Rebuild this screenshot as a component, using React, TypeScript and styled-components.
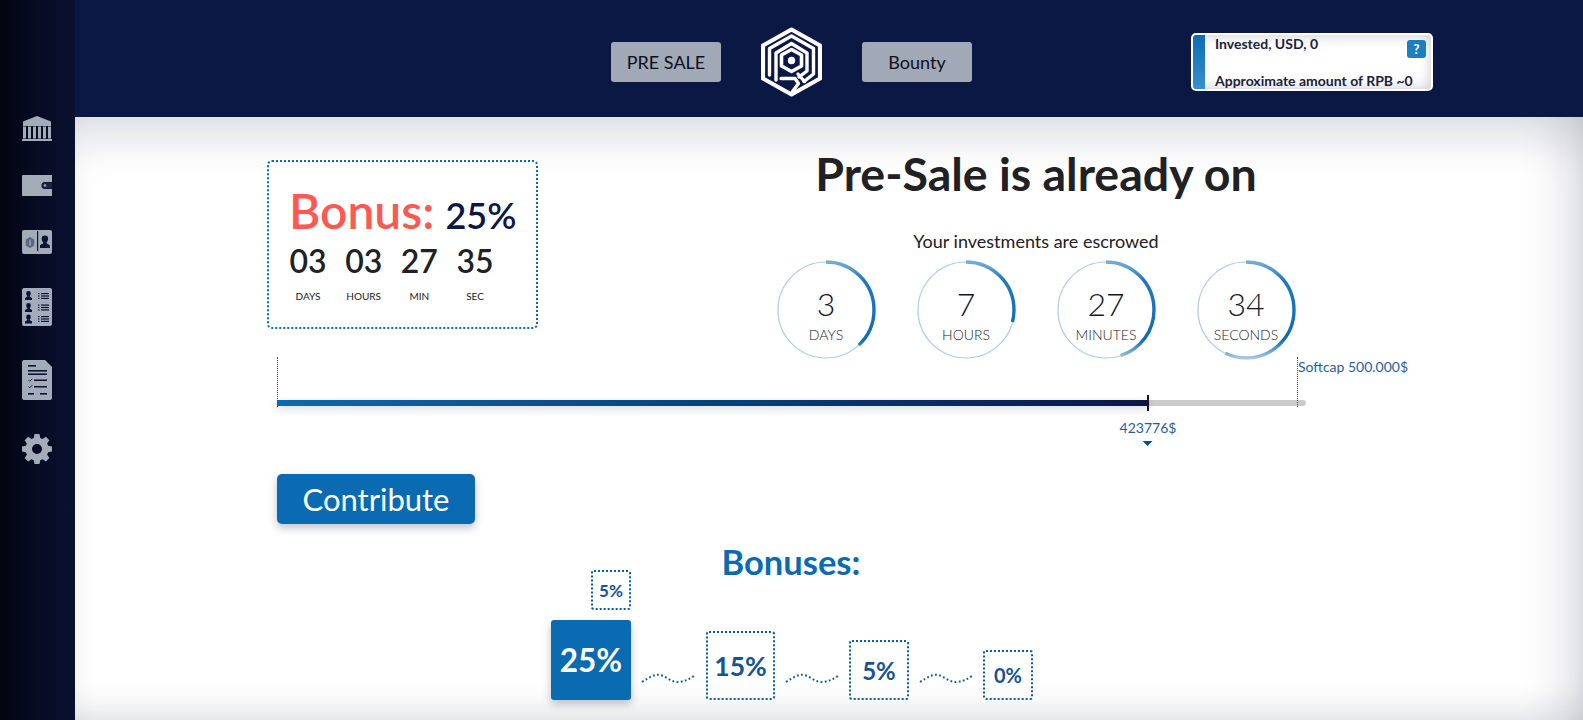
import React from 'react'
import styled, {createGlobalStyle} from 'styled-components'

const GlobalStyle = createGlobalStyle`
html, body {
  margin: 0;
  padding: 0;
  height: 720px;
  overflow: hidden;
  background: #fff;
  font-family: Lato, "Open Sans", sans-serif;
}
`

const Page = styled.div`
display: flex;
width: 1583px;
height: 720px;
overflow: hidden;
`

const Sidebar = styled.nav`
width: 75px;
flex: none;
height: 720px;
box-sizing: border-box;
padding: 116px 0 0 22px;
background: linear-gradient(90deg, #02040f 0%, #060a20 35%, #0a1130 100%);
display: flex;
flex-direction: column;
align-items: flex-start;
`

const SideIcon = styled.svg<{ $gap: number }>`
display: block;
margin-bottom: ${p => p.$gap}px;
`

const Right = styled.div`
flex: 1;
display: flex;
flex-direction: column;
min-width: 0;
`

const Header = styled.header`
height: 117px;
flex: none;
background: #0b1843;
box-sizing: border-box;
padding-left: 536px;
display: flex;
align-items: flex-start;
`

const NavButton = styled.div`
width: 110px;
height: 40px;
margin-top: 42px;
border-radius: 3px;
background: #a2a9b6;
color: #0d0f1c;
font-size: 18px;
display: flex;
align-items: center;
justify-content: center;
`

const Logo = styled.svg`
margin: 27px 40px 0;
display: block;
`

const InfoBox = styled.div`
width: 242px;
height: 58px;
margin: 33px 0 0 219px;
box-sizing: border-box;
border: 2px solid #fff;
border-radius: 5px;
overflow: hidden;
position: relative;
display: flex;
background: #fff;
box-shadow: inset 0 0 14px rgba(0, 0, 0, .22);
`

const InfoStripe = styled.div`
width: 12px;
flex: none;
background: linear-gradient(180deg, #0d6cb4 0%, #3690cf 100%);
`

const InfoText = styled.div`
padding-left: 10px;
color: #1c2238;
font-size: 14px;
font-weight: 700;
line-height: 16px;
display: flex;
flex-direction: column;
justify-content: space-between;
height: 53px;
margin-top: 1px;
`

const HelpBadge = styled.div`
position: absolute;
top: 5px;
right: 5px;
width: 19px;
height: 18px;
border-radius: 3px;
background: #1c7fc4;
color: #fff;
font-size: 13px;
font-weight: 700;
display: flex;
align-items: center;
justify-content: center;
`

const Main = styled.main`
flex: 1;
height: 603px;
box-sizing: border-box;
padding: 43px 0 0 193px;
background: #fff;
box-shadow: inset 0 40px 40px -16px rgba(10, 20, 50, .12),
  inset -44px 0 44px -24px rgba(10, 20, 50, .12),
  inset 0 -26px 30px -14px rgba(10, 20, 50, .1);
color: #202124;
`

const TopRow = styled.div`
display: flex;
align-items: flex-start;
`

const BonusCard = styled.div`
width: 271px;
height: 169px;
margin-left: -1px;
box-sizing: border-box;
border: 2px dotted #0a6ab2;
border-radius: 5px;
padding: 20px 0 0 20px;
background: #fff;
`

const BonusTitle = styled.div`
display: flex;
align-items: baseline;
height: 57px;
line-height: 57px;
`

const BonusWord = styled.span`
font-size: 48px;
color: #fb5a52;
font-weight: 600;
`

const BonusValue = styled.span`
margin-left: 11px;
font-size: 36px;
font-weight: 600;
color: #0b1843;
`

const MiniTimer = styled.div`
display: grid;
grid-template-columns: repeat(4, 55.7px);
margin-top: 2px;
`

const MiniUnit = styled.div`
display: flex;
flex-direction: column;
align-items: center;
width: 38px;
`

const MiniNumber = styled.div`
font-size: 32px;
font-weight: 600;
line-height: 40px;
`

const MiniLabel = styled.div`
font-size: 10px;
line-height: 12px;
margin-top: 9px;
`

const Headline = styled.div`
margin-left: 198px;
width: 600px;
display: flex;
flex-direction: column;
align-items: center;
`

const Title = styled.h1`
margin: -16px 0 0;
font-size: 46.5px;
line-height: 58px;
font-weight: 700;
color: #202124;
white-space: nowrap;
`

const Escrow = styled.div`
margin-top: 29px;
font-size: 18px;
line-height: 20px;
`

const Rings = styled.div`
display: flex;
gap: 40px;
margin-top: 9px;
`

const Ring = styled.div`
position: relative;
width: 100px;
height: 100px;
`

const RingText = styled.div`
position: absolute;
inset: 0;
display: flex;
flex-direction: column;
align-items: center;
padding-top: 28px;
box-sizing: border-box;
`

const RingNumber = styled.div`
font-size: 32px;
font-weight: 300;
line-height: 32px;
color: #14172a;
`

const RingLabel = styled.div`
font-size: 14px;
font-weight: 300;
line-height: 16px;
margin-top: 7px;
color: #222;
`

const Progress = styled.div`
position: relative;
width: 1029px;
margin: 40px 0 0 9px;
height: 6px;
border-radius: 0 3px 3px 0;
background: #cbcbcb;
`

const ProgressFill = styled.div`
height: 6px;
background: linear-gradient(90deg, #0a6ab2 0%, #0b1843 100%);
box-shadow: 0 3px 8px rgba(10, 20, 50, .18);
`

const Marker = styled.div<{ $left: number }>`
position: absolute;
left: ${p => p.$left}px;
top: -43px;
height: 50px;
border-left: 1px dotted #0b5c9e;
`

const Tick = styled.div`
position: absolute;
left: 870px;
top: -5px;
width: 2px;
height: 16px;
background: #16161c;
`

const SoftcapLabel = styled.div`
position: absolute;
left: 1021px;
top: -41px;
font-size: 14px;
line-height: 16px;
color: #1e5f9a;
white-space: nowrap;
`

const AmountLabel = styled.div`
position: absolute;
left: 871px;
top: 20px;
transform: translateX(-50%);
display: flex;
flex-direction: column;
align-items: center;
font-size: 14px;
line-height: 16px;
color: #1e5f9a;
`

const Arrow = styled.div`
width: 0;
height: 0;
margin-top: 5px;
border-left: 5px solid transparent;
border-right: 5px solid transparent;
border-top: 5px solid #0b4f8c;
`

const ContributeButton = styled.div`
width: 198px;
height: 50px;
margin: 68px 0 0 9px;
border-radius: 5px;
background: #0a6ab2;
color: #fff;
font-size: 31px;
display: flex;
align-items: center;
justify-content: center;
box-shadow: 0 4px 8px rgba(10, 20, 50, .25);
`

const BonusHeading = styled.h2`
margin: 17px 0 0;
width: 1046px;
text-align: center;
font-size: 34.5px;
line-height: 42px;
font-weight: 700;
color: #0a6ab2;
`

const Steps = styled.div`
display: flex;
align-items: flex-end;
margin: 37px 0 0 283px;
`

const Step = styled.div<{ $size: number, $font: number, $active?: boolean }>`
position: relative;
width: ${p => p.$size}px;
height: ${p => p.$size}px;
flex: none;
box-sizing: border-box;
border-radius: 3px;
border: ${p => p.$active ? 'none' : '2px dotted #0b5c9e'};
background: ${p => p.$active ? '#0a6ab2' : 'transparent'};
box-shadow: ${p => p.$active ? '0 4px 8px rgba(10, 20, 50, .25)' : 'none'};
color: ${p => p.$active ? '#fff' : '#17548f'};
font-size: ${p => p.$font}px;
font-weight: 700;
display: flex;
align-items: center;
justify-content: center;
`

const SmallStep = styled.div`
position: absolute;
right: 0;
top: -50px;
width: 40px;
height: 40px;
box-sizing: border-box;
border: 2px dotted #0b5c9e;
border-radius: 3px;
color: #17548f;
font-size: 17px;
font-weight: 700;
display: flex;
align-items: center;
justify-content: center;
`

const Wave = styled.svg<{ $gap: number }>`
display: block;
flex: none;
margin: 0 ${p => p.$gap}px 15px 10px;
`

const Squiggle: React.FC<{ gap: number }> = ({gap}) => (
    <Wave $gap={gap} width="54" height="14" viewBox="0 0 54 14">
        <path d="M1 11 C 9 6, 13 3, 19 4 S 31 12, 38 11 S 48 8, 53 5" fill="none" stroke="#0b5c9e"
              strokeWidth="2" strokeDasharray="1.8 2.4"/>
    </Wave>
)

const person = (x: number, y: number, s: number = 1) => (
    <path key={`${x}-${y}`} transform={`translate(${x} ${y}) scale(${s})`}
          d="M3.5 0a2.3 2.3 0 0 1 2.3 2.4c0 1-.5 2-1.1 2.6v.6l2.3 1.3v2.1H0V6.9l2.3-1.3V5c-.6-.6-1.1-1.6-1.1-2.6A2.3 2.3 0 0 1 3.5 0z"
          fill="#0a1336"/>
)

const listLines = (x: number, y: number) => (
    <g key={`${x}-${y}`} fill="#0a1336">
        <rect x={x} y={y} width="1.4" height="1.2"/>
        <rect x={x + 3} y={y} width="8" height="1.2"/>
        <rect x={x} y={y + 2.4} width="1.4" height="1.2"/>
        <rect x={x + 3} y={y + 2.4} width="8" height="1.2"/>
        <rect x={x} y={y + 4.8} width="1.4" height="1.2"/>
        <rect x={x + 3} y={y + 4.8} width="8" height="1.2"/>
    </g>
)

const rings = [
    {value: '3', label: 'DAYS', part: 0.38},
    {value: '7', label: 'HOURS', part: 0.29},
    {value: '27', label: 'MINUTES', part: 0.45},
    {value: '34', label: 'SECONDS', part: 0.57},
]

const TimerRing: React.FC<{ value: string, label: string, part: number, index: number }> = ({value, label, part, index}) => {
    const radius = 48
    const full = 2 * Math.PI * radius
    return (
        <Ring>
            <svg width="100" height="100" viewBox="0 0 100 100">
                <defs>
                    {/* the arc is rotated -90deg, so the gradient is turned back to stay vertical */}
                    <linearGradient id={`ring-${index}`} gradientUnits="userSpaceOnUse" x1="50" y1="0" x2="50" y2="100"
                                    gradientTransform="rotate(90 50 50)">
                        <stop offset="0" stopColor="#7db2dc"/>
                        <stop offset="0.2" stopColor="#1f78bd"/>
                        <stop offset="0.8" stopColor="#0f6cb5"/>
                        <stop offset="1" stopColor="#b4d2ea"/>
                    </linearGradient>
                </defs>
                <circle cx="50" cy="50" r={radius} fill="none" stroke="#a9cde8" strokeWidth="1.2"/>
                <circle cx="50" cy="50" r={radius} fill="none" stroke={`url(#ring-${index})`} strokeWidth="3.4"
                        strokeDasharray={`${full * part} ${full}`} transform="rotate(-90 50 50)"/>
            </svg>
            <RingText>
                <RingNumber>{value}</RingNumber>
                <RingLabel>{label}</RingLabel>
            </RingText>
        </Ring>
    )
}

const App: React.FC = () => {
    return <Page>
        <GlobalStyle/>
        <Sidebar>
            <SideIcon $gap={34} width="30" height="25" viewBox="0 0 30 25">
                <path d="M15 0 L29 5.500 V10 H1 V5.500 Z" fill="#a4abb9"/>
                <path d="M1 10.500h3v12h-3zM6 10.500h3v12h-3zM11 10.500h3v12h-3zM16 10.500h3v12h-3zM21 10.500h3v12h-3zM26 10.500h3v12h-3z" fill="#a4abb9"/>
                <path d="M0 23h30v2H0z" fill="#a4abb9"/>
            </SideIcon>
            <SideIcon $gap={34} width="30" height="21" viewBox="0 0 30 21">
                <path d="M1 0h29v7h-7a3.500 3.500 0 0 0 0 7h7v7H1a1 1 0 0 1-1-1V1a1 1 0 0 1 1-1z" fill="#a4abb9"/>
                <path d="M23 7.500h7v6h-7a3 3 0 0 1 0-6z" fill="#1b2340"/>
                <circle cx="23" cy="10.500" r="1.300" fill="#a4abb9"/>
            </SideIcon>
            <SideIcon $gap={34} width="30" height="24" viewBox="0 0 30 24">
                <rect width="30" height="24" rx="2" fill="#a4abb9"/>
                <rect x="15" y="1" width="1.200" height="20" fill="#0a1336"/>
                <path d="M8 7l4.300 2.500v6L8 18l-4.300-2.500v-6z" fill="#5f6780"/>
                <path d="M8 9.500l1 1v4.500l-1 1-1-1v-4.500z" fill="#8d94a6"/>
                {person(18, 5.500, 1.400)}
            </SideIcon>
            <SideIcon $gap={34} width="30" height="38" viewBox="0 0 30 38">
                <rect width="30" height="38" rx="2" fill="#a4abb9"/>
                {person(3, 3, 1)}
                {person(3, 15, 1)}
                {person(3, 26.500, 1)}
                {listLines(16, 5)}
                {listLines(16, 16.500)}
                {listLines(16, 28)}
            </SideIcon>
            <SideIcon $gap={34} width="30" height="40" viewBox="0 0 30 40">
                <path d="M2 0h21l7 7v31a2 2 0 0 1-2 2H2a2 2 0 0 1-2-2V2a2 2 0 0 1 2-2z" fill="#a4abb9"/>
                <g fill="#0a1336">
                    <rect x="6" y="5" width="8" height="1.600"/>
                    <rect x="6" y="10" width="19" height="1.600"/>
                    <rect x="6" y="13.400" width="19" height="1.600"/>
                    <rect x="12" y="19.500" width="13" height="1.500"/>
                    <rect x="12" y="26" width="13" height="1.500"/>
                    <rect x="6" y="33" width="6" height="1.600"/>
                    <rect x="18" y="33" width="7" height="1.600"/>
                </g>
                <path d="M6.500 20l1.300 1.300 2.400-2.600M6.500 26.500l1.300 1.300 2.400-2.600" fill="none" stroke="#0a1336" strokeWidth="0.9"/>
            </SideIcon>
            <SideIcon $gap={0} width="30" height="30" viewBox="0 0 24 24">
                <path fill="#a4abb9" fillRule="evenodd"
                      d="M10 0h4l.6 3.100 1.900.8 2.600-1.800 2.800 2.800-1.800 2.600.8 1.900 3.100.6v4l-3.100.6-.8 1.900 1.800 2.600-2.800 2.800-2.600-1.800-1.900.8L14 24h-4l-.6-3.100-1.900-.8-2.600 1.800-2.800-2.800 1.800-2.600-.8-1.900L0 14v-4l3.100-.6.8-1.900-1.800-2.600 2.800-2.800 2.600 1.800 1.900-.8zM12 8a4 4 0 1 0 0 8 4 4 0 0 0 0-8z"/>
            </SideIcon>
        </Sidebar>
        <Right>
            <Header>
                <NavButton>PRE SALE</NavButton>
                <Logo width="61" height="70" viewBox="0 0 61 70">
                    <g fill="none" stroke="#fff" strokeLinejoin="round" strokeLinecap="round">
                        <path strokeWidth="4.200" d="M30.500 2.500 L59 18.500 V51.500 L30.500 67.500 L2 51.500 V18.500 Z"/>
                        <path strokeWidth="3.400" d="M8.500 48 V21.500 L30.500 9 L52.500 21.500 V47 L43 54.500"/>
                        <path strokeWidth="3.400" d="M15 53 V26 L30.500 16.500 L46 26 V44 L38 50"/>
                        <path strokeWidth="3.600" d="M30.500 22.500 L40.500 28 V39 L30.500 44.500 L20.500 39 V28 Z"/>
                        <path strokeWidth="3.400" d="M20 51.500 H34 L37.500 56.500 L31.500 64.500"/>
                        <path strokeWidth="3.400" d="M37 47 L43.500 54.500"/>
                    </g>
                    <circle cx="30.500" cy="33.500" r="3.700" fill="#fff"/>
                </Logo>
                <NavButton>Bounty</NavButton>
                <InfoBox>
                    <InfoStripe/>
                    <InfoText>
                        <span>Invested, USD, 0</span>
                        <span>Approximate amount of RPB ~0</span>
                    </InfoText>
                    <HelpBadge>?</HelpBadge>
                </InfoBox>
            </Header>
            <Main>
                <TopRow>
                    <BonusCard>
                        <BonusTitle>
                            <BonusWord>Bonus:</BonusWord>
                            <BonusValue>25%</BonusValue>
                        </BonusTitle>
                        <MiniTimer>
                            <MiniUnit><MiniNumber>03</MiniNumber><MiniLabel>DAYS</MiniLabel></MiniUnit>
                            <MiniUnit><MiniNumber>03</MiniNumber><MiniLabel>HOURS</MiniLabel></MiniUnit>
                            <MiniUnit><MiniNumber>27</MiniNumber><MiniLabel>MIN</MiniLabel></MiniUnit>
                            <MiniUnit><MiniNumber>35</MiniNumber><MiniLabel>SEC</MiniLabel></MiniUnit>
                        </MiniTimer>
                    </BonusCard>
                    <Headline>
                        <Title>Pre-Sale is already on</Title>
                        <Escrow>Your investments are escrowed</Escrow>
                        <Rings>
                            {rings.map((r, i) => <TimerRing key={r.label} index={i} value={r.value} label={r.label} part={r.part}/>)}
                        </Rings>
                    </Headline>
                </TopRow>
                <Progress>
                    <ProgressFill style={{width: `${423776 / 500000 * 100}%`}}/>
                    <Marker $left={0}/>
                    <Marker $left={1020}/>
                    <Tick/>
                    <SoftcapLabel>Softcap 500.000$</SoftcapLabel>
                    <AmountLabel>
                        423776$
                        <Arrow/>
                    </AmountLabel>
                </Progress>
                <ContributeButton>Contribute</ContributeButton>
                <BonusHeading>Bonuses:</BonusHeading>
                <Steps>
                    <Step $size={80} $font={31.5} $active>
                        25%
                        <SmallStep>5%</SmallStep>
                    </Step>
                    <Squiggle gap={11}/>
                    <Step $size={69} $font={26.5}>15%</Step>
                    <Squiggle gap={10}/>
                    <Step $size={60} $font={24}>5%</Step>
                    <Squiggle gap={10}/>
                    <Step $size={50} $font={20}>0%</Step>
                </Steps>
            </Main>
        </Right>
    </Page>
}

export default App
